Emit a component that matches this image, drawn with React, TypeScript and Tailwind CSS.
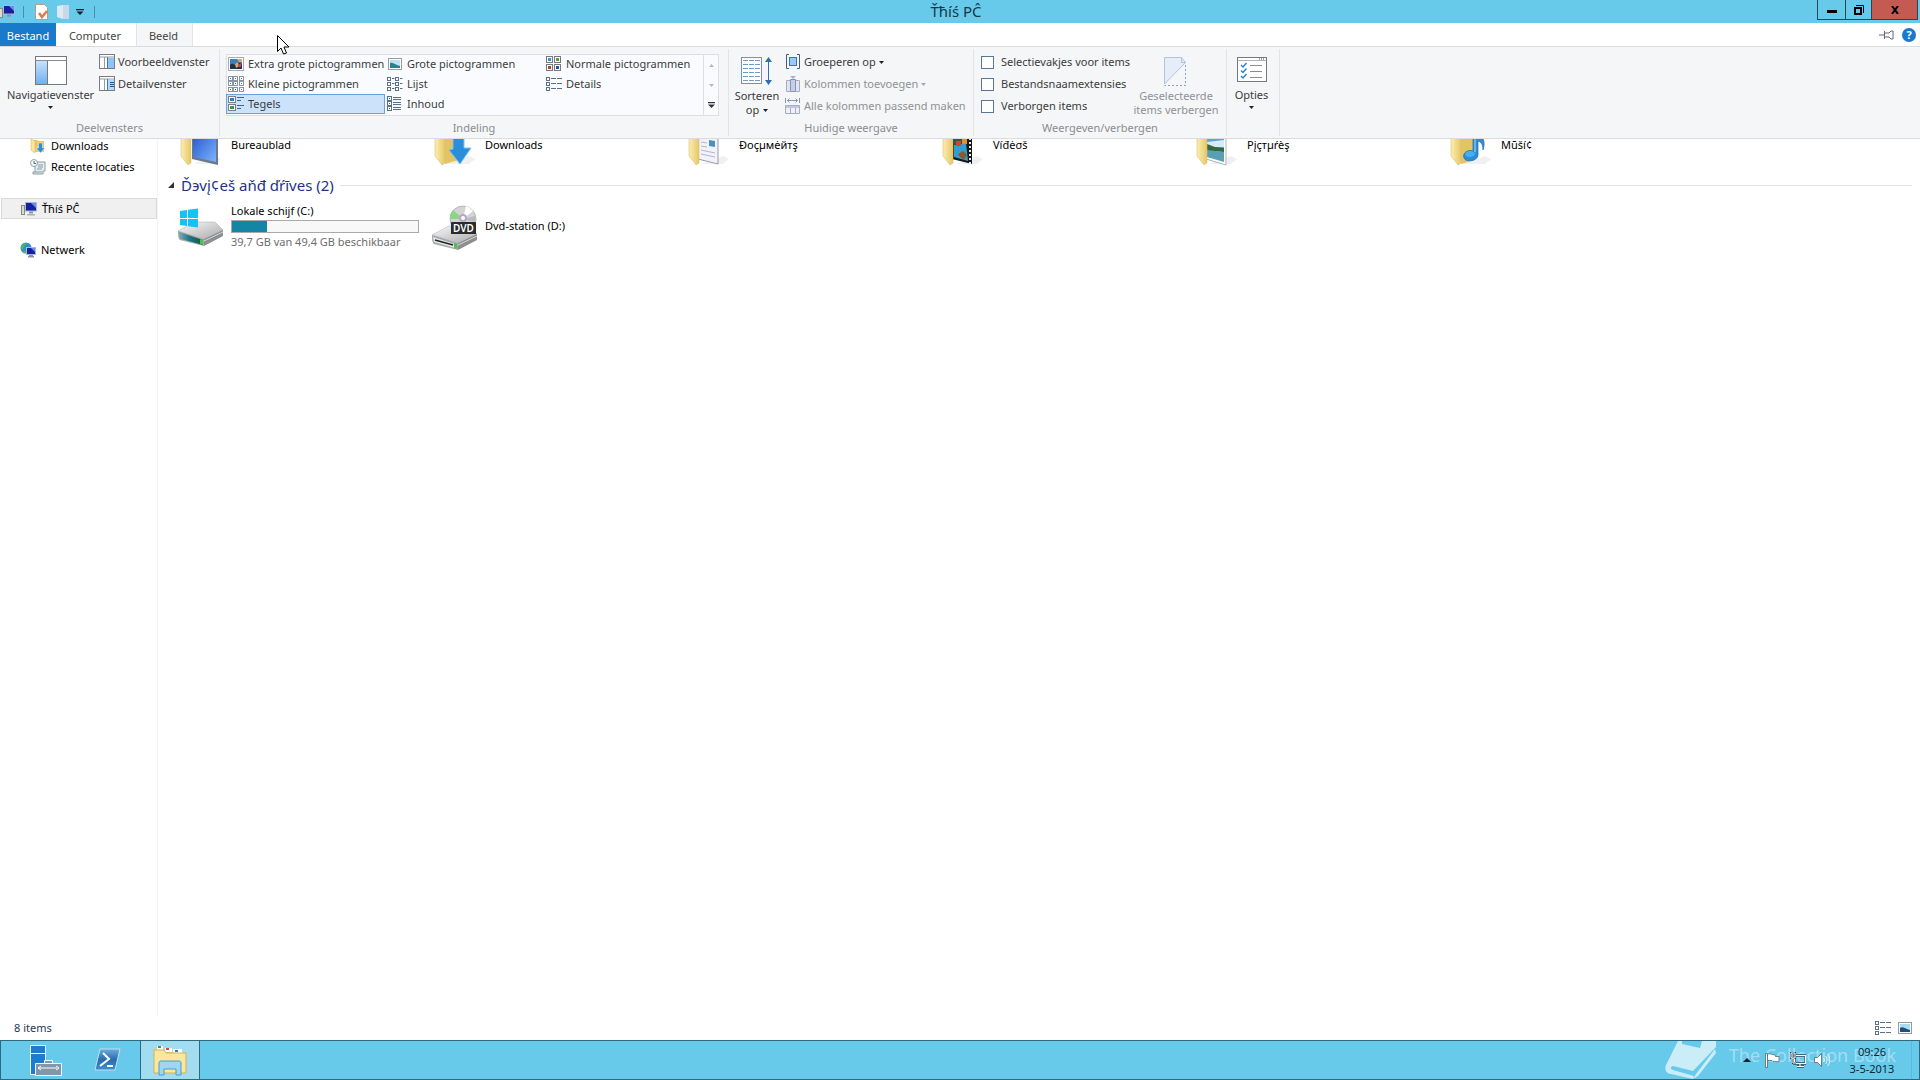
import type { ReactNode } from "react";

const INK = "#5b6f8c";

function Svg({ w = 16, h = 16, vb, children, className = "" }: { w?: number; h?: number; vb?: string; children: ReactNode; className?: string }) {
  return (
    <svg width={w} height={h} viewBox={vb ?? `0 0 ${w} ${h}`} className={`shrink-0 ${className}`} aria-hidden="true">
      {children}
    </svg>
  );
}

/* ---------- small icons ---------- */

function Caret({ color = "#222" }: { color?: string }) {
  return (
    <Svg w={5} h={3}>
      <path d="M0 0h5L2.500 3z" fill={color} />
    </Svg>
  );
}

function ComputerIcon() {
  return (
    <Svg>
      <rect x="0.500" y="4.500" width="3" height="9" fill="#dcdccb" stroke="#8a8a7c" />
      <rect x="4.500" y="1.500" width="11" height="8.500" fill="#1621a0" stroke="#a9b7d8" />
      <path d="M10 2h5v5z" fill="#6f8bea" />
      <path d="M8 10.500h4v2H8z" fill="#8b93a6" />
      <path d="M6 13h8v1.500H6z" fill="#a8afbf" />
    </Svg>
  );
}

function NetworkIcon() {
  return (
    <Svg>
      <circle cx="6" cy="6" r="5.500" fill="#2f8fd0" />
      <path d="M1 5c1-3 4-4 6-4-1 2-2 2-3 3s0 2-1 3-2 0-2-2z" fill="#58b947" />
      <path d="M3 9c2-1 3 0 3 2-1 0-3 0-3-2z" fill="#58b947" />
      <rect x="6.500" y="5.500" width="9" height="7" fill="#1621a0" stroke="#a9b7d8" />
      <path d="M11 6h4v4z" fill="#6f8bea" />
      <path d="M9 13h4v1h1v1.500H8V14h1z" fill="#8b93a6" />
    </Svg>
  );
}

function SmallDownloads() {
  return (
    <Svg>
      <path d="M1 2h6l1 1h6v11H4l-3-2z" fill="#ecc85f" />
      <path d="M1 1l4 2v12l-4-3z" fill="#fbe6a0" stroke="#d6b04c" strokeWidth=".5" />
      <path d="M8.500 5h4v5H15l-4.500 5L6 10h2.500z" fill="#2b8fda" stroke="#fff" strokeWidth=".5" />
    </Svg>
  );
}

function RecentIcon() {
  return (
    <Svg>
      <path d="M5 3h10v9h-2v3H3v-2h2z" fill="#e8eef0" stroke="#8a9a9c" />
      <path d="M8 6h5M8 8h5M7 10h5M5 13h7" stroke="#7f9aa0" fill="none" />
      <circle cx="4" cy="4" r="3.500" fill="#f4faf9" stroke="#8aa6a2" />
      <path d="M4 2v2.500h2" stroke="#567" fill="none" />
    </Svg>
  );
}

function PreviewPane() {
  return (
    <Svg>
      <rect x=".5" y=".5" width="15" height="14" fill="#fff" stroke="#7a7a80" />
      <path d="M1 3h14M5.500 3v11" stroke="#9a9aa0" />
      <rect x="9" y="4" width="6" height="10" fill="#8fc4f6" />
      <path d="M8.500 3v11" stroke="#3b7cc0" />
    </Svg>
  );
}

function DetailPane() {
  return (
    <Svg>
      <rect x=".5" y=".5" width="15" height="14" fill="#fff" stroke="#7a7a80" />
      <path d="M1 3h14M5.500 3v11" stroke="#9a9aa0" />
      <rect x="9" y="4" width="6" height="10" fill="#b5d8fa" />
      <path d="M8.500 3v11" stroke="#3b7cc0" />
      <path d="M11 6.500h4M11 8.500h4M11 10.500h4" stroke="#1d57a0" />
    </Svg>
  );
}

function NavPane() {
  return (
    <Svg w={32} h={30}>
      <defs>
        <linearGradient id="navp" x1="0" y1="0" x2="0" y2="1">
          <stop offset="0" stopColor="#c5e2fc" />
          <stop offset="1" stopColor="#6fb0f2" />
        </linearGradient>
      </defs>
      <rect x=".5" y=".5" width="31" height="28" fill="#fff" stroke="#77777d" />
      <path d="M1 4.500h30" stroke="#8c8c92" />
      <rect x="1" y="5" width="11" height="23" fill="url(#navp)" />
      <path d="M12.500 5v23" stroke="#77777d" />
    </Svg>
  );
}

function XLargeIcon() {
  return (
    <Svg>
      <rect x=".5" y="1.500" width="15" height="13" fill="#fff" stroke="#a9a9ae" />
      <rect x="2" y="3" width="12" height="10" fill="#3b7fc0" />
      <path d="M2 9c3-3 4 1 6-1s3-2 6 1v4H2z" fill="#22304e" />
      <path d="M7 8l3-2 1 4-3 2z" fill="#d8b548" />
      <path d="M10 8h3v3h-3z" fill="#b04a6e" />
      <path d="M9 3h5v3h-3z" fill="#e9a36a" />
    </Svg>
  );
}

function LargeIcon() {
  return (
    <Svg>
      <rect x="1.500" y="2.500" width="13" height="11" fill="#fff" stroke="#9a9aa0" />
      <rect x="3" y="4" width="10" height="8" fill="#bfe0f0" />
      <path d="M3 7c3-1 5 2 10 3v2H3z" fill="#2f7d92" />
    </Svg>
  );
}

function MediumIcon() {
  return (
    <Svg>
      {[
        [0, 0, "#3d8ec9"],
        [8, 0, "#5a9a3c"],
        [0, 8, "#b3432e"],
        [8, 8, "#334a9e"],
      ].map(([x, y, c]) => (
        <g key={`${x}-${y}`}>
          <rect x={Number(x) + 0.5} y={Number(y) + 0.5} width="6" height="6" fill="#fff" stroke="#77777d" />
          <rect x={Number(x) + 2} y={Number(y) + 2} width="3" height="3" fill={String(c)} />
        </g>
      ))}
    </Svg>
  );
}

function SmallIcon() {
  const colors = ["#2f7db5", "#4b8f46", "#2f7db5", "#4b8f46", "#355ca8", "#3a8a80", "#8a5a35", "#355ca8", "#4b8f46"];
  return (
    <Svg>
      {colors.map((c, i) => {
        const x = (i % 3) * 5.5;
        const y = Math.floor(i / 3) * 5.5;
        return (
          <g key={i}>
            <rect x={Math.floor(x) + 0.5} y={Math.floor(y) + 0.5} width="4" height="4" fill="#fff" stroke="#8a94a4" />
            <rect x={Math.floor(x) + 2} y={Math.floor(y) + 2} width="1" height="1" fill={c} />
          </g>
        );
      })}
    </Svg>
  );
}

function ListIcon() {
  return (
    <Svg>
      {[0, 8].map((x) =>
        [1, 6, 11].map((y) => (
          <g key={`${x}-${y}`} stroke={INK} fill="#fff">
            <rect x={x + 0.5} y={y + 0.5} width="3" height="3" />
            <path d={`M${x + 5} ${y + 1.5}h2.500`} />
          </g>
        )),
      )}
    </Svg>
  );
}

function DetailsIcon() {
  return (
    <Svg>
      {[1, 6, 11].map((y) => (
        <g key={y} stroke={INK} fill="#fff">
          <rect x=".5" y={y + 0.5} width="3" height="3" />
          <path d={`M5 ${y + 1.5}h5M11 ${y + 1.5}h5`} />
        </g>
      ))}
    </Svg>
  );
}

function TilesIcon() {
  return (
    <Svg>
      {[
        [0, "#2f7db5"],
        [8, "#4b8f46"],
      ].map(([y, c]) => (
        <g key={String(y)}>
          <rect x=".5" y={Number(y) + 0.5} width="7" height="6" fill="#fff" stroke="#77808f" />
          <rect x="2" y={Number(y) + 2} width="4" height="3" fill={String(c)} />
          <path d={`M9 ${Number(y) + 1.5}h7M9 ${Number(y) + 4.5}h4`} stroke="#3f62a0" />
        </g>
      ))}
    </Svg>
  );
}

function ContentIcon() {
  return (
    <Svg>
      {[0, 5, 10].map((y) => (
        <g key={y}>
          <rect x=".5" y={y + 0.5} width="4" height="4" fill="#fff" stroke={INK} />
          <rect x="2" y={y + 2} width="1" height="1" fill="#2f6f50" />
          <path d={`M6 ${y + 1.5}h8M6 ${y + 3.5}h8`} stroke={INK} />
        </g>
      ))}
    </Svg>
  );
}

function SortIcon() {
  return (
    <Svg w={32} h={30}>
      <rect x=".5" y="1.500" width="20" height="26" fill="#fff" stroke="#8c8c92" />
      <path d="M2 4.500h17M2 8.500h17M2 12.500h17M2 16.500h17M2 20.500h17M2 24.500h17" stroke="#6f9cc4" strokeDasharray="5 1" />
      <path d="M27.500 3v24" stroke="#2f6cb3" />
      <path d="M27.500 1l3.500 5h-7zM27.500 29l3.500-5h-7z" fill="#2f6cb3" />
    </Svg>
  );
}

function GroupIcon() {
  return (
    <Svg>
      <path d="M4 .5H1.500v14H4M12 .5h2.500v14H12" fill="none" stroke="#3c5f92" />
      <rect x="4.500" y="3.500" width="7" height="8" fill="#9ccbf7" stroke="#2f76c4" />
    </Svg>
  );
}

function AddColIcon() {
  return (
    <Svg>
      <path d="M1.500 4.500h13v11h-13z" fill="#dfe5f0" stroke="#a5adbf" />
      <path d="M5.500 3.500h5v12h-5z" fill="#c3cfe6" stroke="#8795b4" />
      <path d="M5 0h6L8 3z" fill="#9fb2d2" />
    </Svg>
  );
}

function FitColsIcon() {
  return (
    <Svg>
      <path d="M.5 0v5M14.500 0v5M2 2.500h11M4.500.5l-2 2 2 2M10.500.5l2 2-2 2" fill="none" stroke="#8795b4" />
      <path d="M.5 7.500h14v8H.5z" fill="#edf0f6" stroke="#a5adbf" />
      <path d="M1 8h13v2H1z" fill="#bcc9e2" />
      <path d="M5.500 10v5M10.500 10v5" stroke="#a5adbf" />
    </Svg>
  );
}

function HideIcon() {
  return (
    <Svg w={24} h={30}>
      <path d="M.5.5h17l4 5L.5 27z" fill="#e6edf8" stroke="#b3c2dd" />
      <path d="M17.500.5v5h4" fill="none" stroke="#b3c2dd" />
      <path d="M21.500 8v20.500H.500" fill="none" stroke="#8ea0c2" strokeDasharray="2 2" />
    </Svg>
  );
}

function OptionsIcon() {
  return (
    <Svg w={30} h={26}>
      <rect x=".5" y=".5" width="29" height="24" fill="#fff" stroke="#77777d" />
      <path d="M1 3.500h28" stroke="#b0b0b5" />
      <path d="M22 2h1M24 2h1M26 2h1" stroke="#444" />
      <path d="M4 8l2 2 3.500-4M4 13.500l2 2 3.500-4M4 19l2 2 3.500-4" fill="none" stroke="#2f82cc" strokeWidth="1.500" />
      <path d="M13 8.500h12M13 14.500h12M13 20.500h12" stroke="#8c8c92" />
    </Svg>
  );
}

function PictureView() {
  return (
    <Svg w={14} h={12}>
      <rect x=".5" y=".5" width="13" height="11" fill="#fff" stroke="#8f9bab" />
      <rect x="2" y="2" width="10" height="8" fill="#a9dcf3" />
      <path d="M2 6c3-2 5 1 10 2v2H2z" fill="#1f4f78" />
    </Svg>
  );
}

/* ---------- 48px icons ---------- */

type Kind = "desktop" | "downloads" | "documents" | "videos" | "pictures" | "music";

function FolderIcon({ kind }: { kind: Kind }) {
  return (
    <Svg w={48} h={48}>
      <defs>
        <linearGradient id={`f-${kind}`} x1="0" y1="0" x2="1" y2="0">
          <stop offset="0" stopColor="#fbeeb0" />
          <stop offset="1" stopColor="#e6c765" />
        </linearGradient>
        <linearGradient id={`s-${kind}`} x1="0" y1="0" x2="1" y2="1">
          <stop offset="0" stopColor="#1e56cf" />
          <stop offset="1" stopColor="#7fb2fb" />
        </linearGradient>
      </defs>
      <path d="M17 44h22l6-5-6-3z" fill="#000" opacity=".06" />
      {(kind === "downloads" || kind === "music") && <path d="M15 8h14v32l-14 4z" fill="#e3c464" />}
      {kind === "desktop" && (
        <g>
          <path d="M16 10l26 6v29l-26-6z" fill="#6f7784" />
          <path d="M17 12l23 5v25l-23-5z" fill="url(#s-desktop)" />
        </g>
      )}
      {kind === "documents" && (
        <g>
          <path d="M14 8l20 5v31l-20-5z" fill="#f2f2fa" stroke="#9a9aa8" />
          <path d="M25 20l6 1v6l-6-1z" fill="#4c92b8" />
          <path d="M17 22l6 1M17 26l6 1M17 30l14 3M17 34l14 3" stroke="#b4b4cc" />
        </g>
      )}
      {kind === "videos" && (
        <g>
          <path d="M14 10h20v34l-20-5z" fill="#171717" />
          <path d="M16 25l12-2 2 18-14-4z" fill="#2f9ed2" />
          <path d="M16 14h13v8l-13 3z" fill="#2b5c48" />
          <path d="M18 21h5v5h-5z" fill="#d8402a" />
          <path d="M24 18h5v6h-5z" fill="#e09428" />
          <path d="M20 34l5-3 4 4-3 5-4-3z" fill="#8b5a28" />
          <path d="M32 18v26" stroke="#eee" strokeWidth="2" strokeDasharray="2 2" />
        </g>
      )}
      {kind === "pictures" && (
        <g>
          <path d="M14 8l20 3v34l-20-6z" fill="#fff" stroke="#a8b4bd" />
          <path d="M15 10l17 3v16l-17-2z" fill="#5ea3de" />
          <path d="M15 22l17-2v7l-17 0z" fill="#d3ecf7" />
          <path d="M15 24l8 3 9 1v4l-17-1z" fill="#37683d" />
          <path d="M15 30l17 2v10l-17-5z" fill="#5aa0b4" />
        </g>
      )}
      <path d="M5 10l10 2v31l-3 2-7-9z" fill={`url(#f-${kind})`} stroke="#dcc070" strokeWidth=".6" />
      {kind === "downloads" && <path d="M23 8h11v20h7L30 44 19 30l4-1z" fill="#2a8edb" stroke="#7cc3f3" />}
      {kind === "music" && (
        <g>
          <path d="M27 8h5c1 9 9 9 5 22 0-6-2-8-5-9v14c0 6-12 8-14 3s4-9 9-7z" fill="#2a8edb" stroke="#1c6cb4" strokeWidth=".7" />
          <path d="M29 10v22" stroke="#a5dcfa" />
          <ellipse cx="24" cy="34" rx="5" ry="3" fill="#48aef0" />
        </g>
      )}
    </Svg>
  );
}

function DriveBody({ dvd = false }: { dvd?: boolean }) {
  const id = dvd ? "db2" : "db1";
  return (
    <g>
      <defs>
        <linearGradient id={id} x1="0" y1="0" x2="1" y2="1">
          <stop offset="0" stopColor="#fafafa" />
          <stop offset="1" stopColor="#a9a9ab" />
        </linearGradient>
        <linearGradient id={`${id}f`} x1="0" y1="0" x2="1" y2="0">
          <stop offset="0" stopColor="#7fa9b4" />
          <stop offset=".45" stopColor="#1c7386" />
          <stop offset="1" stopColor="#17563f" />
        </linearGradient>
      </defs>
      <path d="M2 31l17-9h20l8 8-19 9z" fill={`url(#${id})`} stroke="#b5b5b5" strokeWidth=".6" />
      <path d="M2 31l26 8v7L4 40c-2-1-2-6-2-9z" fill="#a4a8aa" />
      <path d="M47 30v6L28 46v-7z" fill="#8d8e90" />
      <path d="M28 41l19-9" stroke="#d8d8d8" />
      {dvd ? (
        <g>
          <path d="M3 33l22 7v4L4 38z" fill="#e6e6e6" />
          <path d="M5 36l18 5" stroke="#222" strokeWidth="1.500" />
        </g>
      ) : (
        <path d="M3 32l24 8v5L5 39c-2-1-2-4-2-7z" fill={`url(#${id}f)`} />
      )}
      <path d="M24 39l3 1v5l-3-1z" fill="#45c64c" />
    </g>
  );
}

function HddIcon() {
  return (
    <Svg w={48} h={48}>
      <DriveBody />
      <path d="M4 11l7-1v8H4zM12 9.800L22 8.500V18H12zM4 19h7v7l-7-1zM12 19h10v8.500L12 26.200z" fill="#12c3f4" />
    </Svg>
  );
}

function DvdIcon() {
  return (
    <Svg w={48} h={48}>
      <DriveBody dvd />
      <circle cx="33" cy="15" r="13" fill="#d3d4d6" stroke="#a2a4a6" strokeWidth=".7" />
      <path d="M33 15L23 6a13 13 0 0 0-3 9z" fill="#8ed488" />
      <path d="M33 15l3-13a13 13 0 0 1 7 5z" fill="#fff" />
      <path d="M33 15l12-3a13 13 0 0 1 0 6z" fill="#b9bbbd" />
      <circle cx="33" cy="14" r="4" fill="#b9a6c7" />
      <circle cx="33" cy="14" r="2" fill="#fff" />
      <path d="M22 18h23q1 0 1 1v11H21V19q0-1 1-1z" fill="#2b2b2b" />
      <text x="33.500" y="28" textAnchor="middle" fontFamily="Noto Sans, sans-serif" fontWeight="600" fontSize="10" fill="#fff">DVD</text>
    </Svg>
  );
}

/* ---------- title bar and tabs ---------- */

function TitleBar() {
  return (
    <header className="relative flex h-[23px] shrink-0 items-start justify-end bg-[#67caea]">
      <div className="absolute left-0 top-0 flex h-[23px] items-center">
        <span className="-ml-px"><ComputerIcon /></span>
        <span className="ml-2 h-3 w-px bg-[#4790a8]" />
        <button aria-label="Eigenschappen" className="ml-2.5">
          <Svg>
            <path d="M1.500.5h9l3 3v12h-12z" fill="#fdfdfd" stroke="#a9a08f" />
            <path d="M5 9l3 4 5-6" fill="none" stroke="#e07a4a" strokeWidth="2.500" />
          </Svg>
        </button>
        <button aria-label="Nieuwe map" className="ml-[6px]">
          <Svg>
            <path d="M1 2l6-1v14l-6-2z" fill="#dfe9f3" />
            <path d="M7 1h6v14H7z" fill="#c7d8e8" />
          </Svg>
        </button>
        <button aria-label="Werkbalk aanpassen" className="ml-1">
          <Svg w={8} h={6}>
            <path d="M0 0h8v1.200H0zM.5 2.500h7L4 6z" fill="#123" />
          </Svg>
        </button>
        <span className="ml-2.5 h-3 w-px bg-[#4790a8]" />
      </div>
      <h1 className="absolute inset-x-0 top-0 mr-2 text-center text-[15px] leading-[23px] text-[#123848]">Ťħíś PĈ</h1>
      <div className="relative mr-0.5 flex h-5 border border-t-0 border-[#2b4650]">
        <button aria-label="Minimaliseren" className="flex w-[27px] items-end justify-center pb-1.5">
          <span className="h-[3px] w-2.5 bg-black" />
        </button>
        <button aria-label="Verkleinen" className="flex w-[26px] items-center justify-center border-l border-[#2b4650]">
          <Svg w={10} h={10}>
            <path d="M1 3h6v6H1z" fill="none" stroke="#000" strokeWidth="2" />
            <path d="M2 .5h7.500V8" fill="none" stroke="#000" />
          </Svg>
        </button>
        <button aria-label="Sluiten" className="flex w-[46px] items-center justify-center border-l border-[#2b4650] bg-[#c35b53]">
          <Svg w={8} h={8}>
            <path d="M1 0l6 8M7 0L1 8" stroke="#000" strokeWidth="2" />
          </Svg>
        </button>
      </div>
    </header>
  );
}

function Tabs() {
  return (
    <nav className="flex h-[23px] shrink-0 bg-white text-[11px] leading-[25px] text-[#444]">
      <button className="w-14 bg-[#1979ca] text-white">Bestand</button>
      <button className="w-20 pr-0.5">Computer</button>
      <button className="w-[57px] border-x border-[#e3e4e6] bg-[#f5f6f7] pr-0.5">Beeld</button>
      <div className="ml-auto flex items-center gap-2 pr-1">
        <button aria-label="Lint vastmaken">
          <Svg w={15} h={10}>
            <path d="M0 5h5M5.500 1v8M6 3h4l2-2h2v8h-2l-2-2H6" fill="none" stroke="#667" />
          </Svg>
        </button>
        <button aria-label="Help">
          <Svg w={14} h={14}>
            <circle cx="7" cy="7" r="7" fill="#1979ca" />
            <text x="7" y="11" textAnchor="middle" fontFamily="Noto Sans, sans-serif" fontWeight="700" fontSize="11" fill="#fff">?</text>
          </Svg>
        </button>
      </div>
    </nav>
  );
}

/* ---------- ribbon ---------- */

function Group({ label, width, children }: { label: string; width: string; children: ReactNode }) {
  return (
    <section className={`my-0.5 flex shrink-0 flex-col border-r border-[#e2e3e4] ${width}`}>
      <div className="flex flex-1 items-start">{children}</div>
      <h2 className="h-4 text-center leading-4 text-[#8a8d91]">{label}</h2>
    </section>
  );
}

function Row({ icon, children, disabled = false }: { icon: ReactNode; children: ReactNode; disabled?: boolean }) {
  return (
    <button disabled={disabled} className={`flex h-[22px] items-center gap-[3px] whitespace-nowrap ${disabled ? "text-[#8f9196]" : ""}`}>
      {icon}
      {children}
    </button>
  );
}

const layouts: [string, ReactNode][] = [
  ["Extra grote pictogrammen", <XLargeIcon />],
  ["Grote pictogrammen", <LargeIcon />],
  ["Normale pictogrammen", <MediumIcon />],
  ["Kleine pictogrammen", <SmallIcon />],
  ["Lijst", <ListIcon />],
  ["Details", <DetailsIcon />],
  ["Tegels", <TilesIcon />],
  ["Inhoud", <ContentIcon />],
];

function Ribbon() {
  return (
    <div className="flex h-[93px] shrink-0 border-y border-[#dadbdc] bg-[#f5f6f7] text-[11px] leading-4 text-[#3b3b3b]">
      <Group label="Deelvensters" width="w-[220px]">
        <button className="ml-2 mt-[7px] flex w-[85px] flex-col items-center whitespace-nowrap">
          <NavPane />
          <span className="mb-[3px] mt-px">Navigatievenster</span>
          <Caret />
        </button>
        <div className="ml-1.5 mt-0.5">
          <Row icon={<PreviewPane />}>Voorbeeldvenster</Row>
          <Row icon={<DetailPane />}>Detailvenster</Row>
        </div>
      </Group>

      <Group label="Indeling" width="w-[509px]">
        <div className="ml-1.5 mt-[5px] flex border border-[#dcdfe3] bg-[#fafbfe]">
          <div className="-my-px -ml-px grid grid-cols-[repeat(3,159px)] grid-rows-[repeat(3,20px)]">
            {layouts.map(([name, icon]) => (
              <button
                key={name}
                className={
                  name === "Tegels"
                    ? "flex items-center gap-1 whitespace-nowrap border border-[#6ba0dc] bg-[#cce2fb] pl-px"
                    : "flex items-center gap-1 whitespace-nowrap pl-0.5"
                }
              >
                {icon}
                {name}
              </button>
            ))}
          </div>
          <div className="grid w-[15px] grid-rows-[repeat(3,20px)] place-items-center border-l border-[#dcdfe3]">
            <button aria-label="Omhoog" className="flex"><Svg w={5} h={3}><path d="M0 3h5L2.500 0z" fill="#b5b8bd" /></Svg></button>
            <button aria-label="Omlaag" className="flex"><Caret color="#b5b8bd" /></button>
            <button aria-label="Meer" className="flex"><Svg w={7} h={6}><path d="M0 0h7v1.200H0zM0 2.500h7L3.500 6z" fill="#334" /></Svg></button>
          </div>
        </div>
      </Group>

      <Group label="Huidige weergave" width="w-[245px]">
        <button className="ml-[5px] mt-[7px] flex w-[46px] flex-col items-center leading-[14px]">
          <SortIcon />
          <span className="mt-[3px]">Sorteren</span>
          <span className="flex items-center gap-1">op <Caret /></span>
        </button>
        <div className="ml-[5px] mt-0.5">
          <Row icon={<GroupIcon />}>Groeperen op <Caret /></Row>
          <Row disabled icon={<AddColIcon />}>Kolommen toevoegen <Caret color="#a5a8ad" /></Row>
          <Row disabled icon={<FitColsIcon />}>Alle kolommen passend maken</Row>
        </div>
      </Group>

      <Group label="Weergeven/verbergen" width="w-[253px]">
        <div className="ml-[7px] mt-0.5">
          {["Selectievakjes voor items", "Bestandsnaamextensies", "Verborgen items"].map((t) => (
            <label key={t} className="flex h-[22px] items-center gap-[7px] whitespace-nowrap">
              <input type="checkbox" className="size-[13px] appearance-none border border-[#5b7595] bg-white" />
              {t}
            </label>
          ))}
        </div>
        <button disabled className="ml-auto mr-2 mt-2 flex w-[84px] flex-col items-center whitespace-nowrap leading-[14px] text-[#8f9196]">
          <HideIcon />
          <span className="mt-0.5">Geselecteerde</span>
          <span>items verbergen</span>
        </button>
      </Group>

      <Group label="" width="w-[53px]">
        <button className="mt-2 flex w-full flex-col items-center pr-[3px]">
          <OptionsIcon />
          <span className="mb-[3px] mt-1">Opties</span>
          <Caret />
        </button>
      </Group>
    </div>
  );
}

/* ---------- body ---------- */

const folders: [string, Kind][] = [
  ["Bureaublad", "desktop"],
  ["Downloads", "downloads"],
  ["Ðoçµмėйтş", "documents"],
  ["Víđėσš", "videos"],
  ["Pįçтµŕèş", "pictures"],
  ["Mūší¢", "music"],
];

function SideItem({ icon, text, className = "" }: { icon: ReactNode; text: string; className?: string }) {
  return (
    <a href="#" className={`flex h-[21px] items-center gap-[5px] whitespace-nowrap ${className}`}>
      {icon}
      {text}
    </a>
  );
}

function Sidebar() {
  return (
    <aside className="w-[158px] shrink-0 border-r border-[#f3f4f6] pl-px">
      <SideItem icon={<SmallDownloads />} text="Downloads" className="-mt-1 pl-[29px]" />
      <SideItem icon={<RecentIcon />} text="Recente locaties" className="pl-[29px]" />
      <SideItem icon={<ComputerIcon />} text="Ťħíś PĈ" className="mt-[21px] border border-[#d9d9d9] bg-[#f0f0f0] pl-[19px]" />
      <SideItem icon={<NetworkIcon />} text="Netwerk" className="mt-5 pl-[19px]" />
    </aside>
  );
}

function Files() {
  return (
    <main className="min-w-0 flex-1 overflow-hidden pl-[18px]">
      <div className="-mt-[19px] grid grid-cols-[repeat(6,254px)]">
        {folders.map(([name, kind]) => (
          <button key={kind} className="flex items-center gap-[7px] text-left leading-none">
            <FolderIcon kind={kind} />
            {name}
          </button>
        ))}
      </div>
      <h2 className="-ml-2 mr-2 mt-[7px] flex h-5 items-center text-[15px] text-[#1e3287]">
        <Svg w={6} h={6}><path d="M6 0v6H0z" fill="#333" /></Svg>
        <span className="ml-[7px] mr-1.5 whitespace-nowrap">Ďэvį¢eš aňđ ďŕīves (2)</span>
        <span className="h-px flex-1 bg-[#e2e4e8]" />
      </h2>
      <div className="mt-[5px] flex">
        <button className="flex w-[254px] items-start gap-[7px] text-left">
          <HddIcon />
          <span className="mt-[3px] flex w-[188px] flex-col">
            <span className="leading-4">Lokale schijf (C:)</span>
            <span className="mt-px flex h-[13px] border border-[#a9a9a9] bg-[#f8f8f8]">
              <span className="w-[19%] bg-[#1286a4]" />
            </span>
            <span className="whitespace-nowrap leading-[18px] text-[#6d6d6d]">39,7 GB van 49,4 GB beschikbaar</span>
          </span>
        </button>
        <button className="flex items-center gap-[7px] text-left">
          <span className="mt-1"><DvdIcon /></span>
          Dvd-station (D:)
        </button>
      </div>
    </main>
  );
}

/* ---------- taskbar ---------- */

function Taskbar() {
  return (
    <footer className="relative flex h-10 shrink-0 border border-[#2d6a7e] bg-[#67caea]">
      <button aria-label="Serverbeheer" className="flex w-[88px] items-center justify-center">
        <Svg w={34} h={34}>
          <path d="M2.500 2.500h15v29h-15z" fill="#1b7cd0" stroke="#eaf6fc" />
          <path d="M3 10.500h14" stroke="#eaf6fc" />
          <path d="M16.500 20v-2.500h8V20M7.500 20.500h26v12h-26z" fill="#8196a8" stroke="#eef6fa" />
          <path d="M11 25h18M13 23l-3 2 3 2M28 23l3 2-3 2" stroke="#fff" fill="none" />
        </Svg>
      </button>
      <button aria-label="Windows PowerShell" className="flex w-9 items-center justify-center">
        <Svg w={28} h={24}>
          <defs>
            <linearGradient id="ps" x1="0" y1="0" x2="0" y2="1">
              <stop offset="0" stopColor="#6caede" />
              <stop offset=".5" stopColor="#2a6cae" />
              <stop offset="1" stopColor="#3f8fd0" />
            </linearGradient>
          </defs>
          <path d="M7 1h20l-5 21H2z" fill="url(#ps)" stroke="#c2e0f0" strokeLinejoin="round" />
          <path d="M10 5l6 6-9 7M14 18h6" fill="none" stroke="#fff" strokeWidth="2" />
        </Svg>
      </button>
      <button aria-label="Verkenner" className="-my-px ml-[15px] flex w-[60px] items-center justify-center border border-[#2d6a7e] bg-[#a2dcf1]">
        <Svg w={34} h={32}>
          <path d="M2 4h8l1 2h8l1 2h11v20H2z" fill="#f0cf72" />
          <path d="M4 2h6v4H4z" fill="#fff" /><path d="M5 2h3v2H5z" fill="#35a047" />
          <path d="M12 4h7v4h-7z" fill="#fff" /><path d="M13 4h3v2h-3z" fill="#d5453c" />
          <path d="M20 5h9v4h-9z" fill="#fff" /><path d="M22 6h3v2h-3z" fill="#3679c4" />
          <path d="M1 6h10l2 3h20v20H1z" fill="#fae69c" stroke="#d3b257" />
          <path d="M6 31V18.500C6 17.500 7 17 8 17h18c1 0 2 .5 2 1.500V31h-5v-6H11v6z" fill="#9ed7f3" stroke="#4b9cca" />
        </Svg>
      </button>

      <div className="absolute right-[23px] top-0 flex items-start gap-3 text-white/40">
        <Svg w={52} h={38}>
          <path d="M17 0h-4L1 24c-2 6 1 8 5 9l22 5 1-3-21-6c-3-1-3-3 0-4l20 5L51 6v-6H37l-2 7-18-4z" fill="#fff" opacity=".65" />
          <path d="M50 8L31 33l-3 5 5-3L51 12z" fill="#fff" opacity=".65" />
        </Svg>
        <span className="mt-0.5 whitespace-nowrap text-[18px] leading-6">The Collection Book</span>
      </div>

      <div className="relative ml-auto flex items-center">
        <button aria-label="Verborgen pictogrammen" className="mr-[13px]"><Svg w={8} h={4}><path d="M0 4h8L4 0z" fill="#123" /></Svg></button>
        <button aria-label="Onderhoudscentrum" className="mr-2.5">
          <Svg>
            <path d="M1.500 1.500h2v14h-2z" fill="#fff" stroke="#456" strokeWidth=".7" />
            <path d="M3.500 2.500c3-2 4 1 7 0l1 2h3.500v5c-3 1-4-1-6 0l-1-1H3.500z" fill="#fff" stroke="#456" strokeWidth=".7" />
          </Svg>
        </button>
        <button aria-label="Netwerk" className="mr-2">
          <Svg>
            <path d="M4.500 3.500h11v8h-11zM7 14.500h7M10 12v2" fill="none" stroke="#345" strokeWidth="2.500" />
            <path d="M4.500 3.500h11v8h-11zM7 14.500h7M10 12v2" fill="none" stroke="#fff" strokeWidth="1.200" />
            <path d="M1 1h4v5H1zM3 6v5h3" fill="none" stroke="#345" strokeWidth="2" />
            <path d="M1 1h4v5H1zM3 6v5h3" fill="none" stroke="#fff" />
          </Svg>
        </button>
        <button aria-label="Volume">
          <Svg>
            <path d="M.5 5.500h3l4-4v13l-4-4h-3z" fill="#fff" stroke="#456" strokeWidth=".7" />
            <path d="M9.500 6c1 1 1 3 0 4M11.500 4c2 2 2 6 0 8M13.500 2c3 3 3 9 0 12" fill="none" stroke="#e9f7fc" />
          </Svg>
        </button>
        <div className="ml-[11px] mr-2 w-[62px] text-center text-[11px] leading-[17px] text-[#0a2733]">
          <div>09:26</div>
          <div>3-5-2013</div>
        </div>
        <span className="h-full w-2 border-l border-[#5cb9d8]" />
      </div>
    </footer>
  );
}

export default function App() {
  return (
    <div className="relative flex h-screen flex-col overflow-hidden bg-white font-['Noto_Sans',sans-serif] text-[12px] leading-4 text-black">
      <TitleBar />
      <Tabs />
      <Ribbon />
      <div className="flex min-h-0 flex-1 text-[11px]">
        <Sidebar />
        <Files />
      </div>
      <div className="flex h-6 shrink-0 items-center pl-3.5 pr-2 text-[11px] text-[#1e395b]">
        <span>8 items</span>
        <button aria-label="Details" className="ml-auto mr-[7px]"><DetailsIcon /></button>
        <button aria-label="Grote pictogrammen"><PictureView /></button>
      </div>
      <Taskbar />
      <Svg w={12} h={20} className="pointer-events-none absolute left-[277px] top-[35px]">
        <path d="M.5.5v16l3.500-3.500 2.500 6 3-1-2.500-6h5z" fill="#fff" stroke="#000" />
      </Svg>
    </div>
  );
}
